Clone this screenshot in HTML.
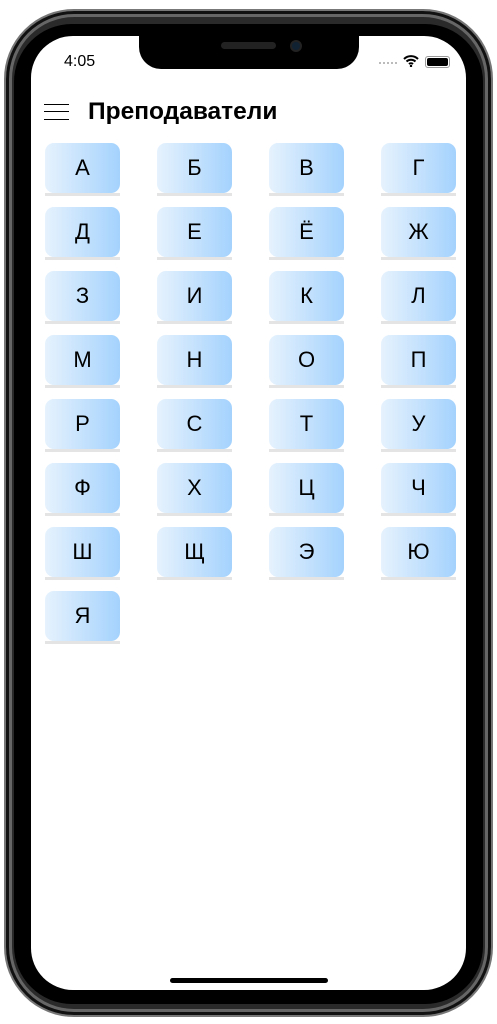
<!DOCTYPE html>
<html><head><meta charset="utf-8"><style>
*{margin:0;padding:0;box-sizing:border-box}
body{width:497px;height:1024px;background:#fff;position:relative;overflow:hidden;font-family:"Liberation Sans",sans-serif}
.frame{position:absolute;left:4px;top:9px;width:489px;height:1008px;border-radius:70px;background:#2a2a2a;border:2px solid #777;box-shadow:inset 0 0 0 3px #111,inset 0 0 0 6px #666}
.bezel{position:absolute;left:14px;top:24px;width:469px;height:980px;border-radius:58px;background:#000}
.screen{position:absolute;left:31px;top:36px;width:435px;height:954px;border-radius:42px;background:#fff;overflow:hidden}
.notch{position:absolute;left:108px;top:0;width:220px;height:33px;background:#000;border-radius:0 0 22px 22px}
.spk{position:absolute;left:221px;top:42px;width:55px;height:7px;border-radius:4px;background:#222}
.cam{position:absolute;left:290px;top:40px;width:12px;height:12px;border-radius:50%;background:#123;border:2px solid #222}
.time{position:absolute;left:64px;top:53px;font-size:16px;font-weight:500}
.home{position:absolute;left:170px;top:978px;width:158px;height:5px;border-radius:3px;background:#000}
.ham{position:absolute;left:44px;width:25px;height:1px;background:#000}
h1{position:absolute;left:88px;top:98px;font-size:24.5px;font-weight:bold}
.b{position:absolute;width:75px;height:53px;border-bottom:3px solid #e4e4e4}
.b div{width:75px;height:50px;border-radius:9px;background:linear-gradient(90deg,#e6f2fd,#a4d2fd);display:flex;align-items:center;justify-content:center;font-size:22px;color:#000}
</style></head><body>
<div class="frame"></div><div class="bezel"></div>
<div class="screen"><div class="notch"></div></div>
<div class="spk"></div><div class="cam"></div>
<div class="time">4:05</div>
<div style="position:absolute;left:379px;top:62px;width:18px;height:2px;border-top:2px dotted #bbb"></div>
<svg style="position:absolute;left:403px;top:55px" width="16" height="12" viewBox="0 0 16 12"><path d="M1 4a10 10 0 0 1 14 0M3.5 6.5a6.5 6.5 0 0 1 9 0M6 9a3 3 0 0 1 4 0" stroke="#000" stroke-width="2" fill="none"/><circle cx="8" cy="11" r="1.2"/></svg>
<div style="position:absolute;left:425px;top:56px;width:25px;height:12px;border:1px solid #999;border-radius:3px;padding:1px"><div style="width:100%;height:100%;background:#000;border-radius:2px"></div></div>
<div class="ham" style="top:104px"></div><div class="ham" style="top:111px"></div><div class="ham" style="top:119px"></div>
<h1>Преподаватели</h1>
<div class="b" style="left:45px;top:143px"><div>А</div></div>
<div class="b" style="left:157px;top:143px"><div>Б</div></div>
<div class="b" style="left:269px;top:143px"><div>В</div></div>
<div class="b" style="left:381px;top:143px"><div>Г</div></div>
<div class="b" style="left:45px;top:207px"><div>Д</div></div>
<div class="b" style="left:157px;top:207px"><div>Е</div></div>
<div class="b" style="left:269px;top:207px"><div>Ё</div></div>
<div class="b" style="left:381px;top:207px"><div>Ж</div></div>
<div class="b" style="left:45px;top:271px"><div>З</div></div>
<div class="b" style="left:157px;top:271px"><div>И</div></div>
<div class="b" style="left:269px;top:271px"><div>К</div></div>
<div class="b" style="left:381px;top:271px"><div>Л</div></div>
<div class="b" style="left:45px;top:335px"><div>М</div></div>
<div class="b" style="left:157px;top:335px"><div>Н</div></div>
<div class="b" style="left:269px;top:335px"><div>О</div></div>
<div class="b" style="left:381px;top:335px"><div>П</div></div>
<div class="b" style="left:45px;top:399px"><div>Р</div></div>
<div class="b" style="left:157px;top:399px"><div>С</div></div>
<div class="b" style="left:269px;top:399px"><div>Т</div></div>
<div class="b" style="left:381px;top:399px"><div>У</div></div>
<div class="b" style="left:45px;top:463px"><div>Ф</div></div>
<div class="b" style="left:157px;top:463px"><div>Х</div></div>
<div class="b" style="left:269px;top:463px"><div>Ц</div></div>
<div class="b" style="left:381px;top:463px"><div>Ч</div></div>
<div class="b" style="left:45px;top:527px"><div>Ш</div></div>
<div class="b" style="left:157px;top:527px"><div>Щ</div></div>
<div class="b" style="left:269px;top:527px"><div>Э</div></div>
<div class="b" style="left:381px;top:527px"><div>Ю</div></div>
<div class="b" style="left:45px;top:591px"><div>Я</div></div>
<div class="home"></div>
</body></html>
